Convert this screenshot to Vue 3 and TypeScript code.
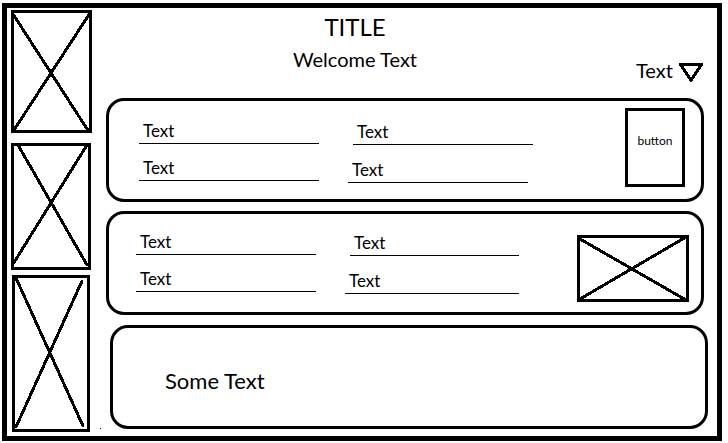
<script setup lang="ts">
import { reactive, ref } from 'vue'

type Line = [number, number, number, number]

interface Placeholder {
  height: number
  x: number
  width: number
  lines: Line[]
}

const placeholders: Placeholder[] = [
  { height: 123, x: 0, width: 81, lines: [[2, 4, 78, 122], [79, 3, 3, 120]] },
  { height: 127, x: 0, width: 80, lines: [[7, 2, 76, 122], [76, 2, 2, 121]] },
  { height: 157, x: 1, width: 78, lines: [[5, 3, 72, 151], [71, 6, 5, 152]] },
]

const choice = ref('Text')
const first = reactive([['Text', 'Text'], ['Text', 'Text']])
const second = reactive([['Text', 'Text'], ['Text', 'Text']])
</script>

<template>
  <div class="frame">
    <aside class="sidebar">
      <svg
        v-for="(p, i) in placeholders"
        :key="i"
        class="placeholder"
        :viewBox="`0 0 81 ${p.height}`"
        aria-hidden="true"
      >
        <rect :x="p.x + 1.5" y="1.5" :width="p.width - 3" :height="p.height - 3" />
        <line v-for="(l, j) in p.lines" :key="j" :x1="l[0]" :y1="l[1]" :x2="l[2]" :y2="l[3]" />
      </svg>
    </aside>
    <span class="speck"></span>

    <main class="main">
      <header class="header">
        <div class="heading">
          <h1>TITLE</h1>
          <p>Welcome Text</p>
        </div>
        <div class="dropdown">
          <select v-model="choice" aria-label="Text">
            <option>Text</option>
          </select>
          <svg class="arrow" viewBox="0 0 24 21" aria-hidden="true">
            <path d="M1.5 2.5H22.5L12 18.5Z" />
          </svg>
        </div>
      </header>

      <section class="card">
        <div class="fields">
          <div v-for="(column, c) in first" :key="c" class="column">
            <input v-for="(_, r) in column" :key="r" v-model="column[r]" type="text" aria-label="Text" />
          </div>
        </div>
        <button type="button" class="action">button</button>
      </section>

      <section class="card media">
        <div class="fields">
          <div v-for="(column, c) in second" :key="c" class="column">
            <input v-for="(_, r) in column" :key="r" v-model="column[r]" type="text" aria-label="Text" />
          </div>
        </div>
        <svg class="placeholder picture" viewBox="0 0 112 67" aria-hidden="true">
          <rect x="1.5" y="1.5" width="109" height="64" />
          <line x1="3" y1="4" x2="109" y2="65" />
          <line x1="109" y1="2" x2="3" y2="64" />
        </svg>
      </section>

      <section class="card note">
        <p>Some Text</p>
      </section>
    </main>
  </div>
</template>

<style>
body {
  background: #fff;
}
</style>

<style scoped>
* {
  box-sizing: border-box;
}

.frame {
  display: flex;
  margin: 3px 6px 2px 2px;
  padding: 2px 9px 4px 4px;
  border: 5px solid #000;
  background: #fff;
  color: #000;
  font-family: Lato, "Liberation Sans", sans-serif;
}

h1,
p {
  margin: 0;
  font-weight: 400;
}

.sidebar {
  display: flex;
  flex-direction: column;
  flex: none;
  width: 81px;
}

.placeholder {
  display: block;
  width: 100%;
  fill: none;
  stroke: #000;
  stroke-width: 3;
  stroke-linecap: round;
  shape-rendering: crispEdges;
}

.sidebar .placeholder:nth-child(2) {
  margin: 10px 0 5px;
}

.speck {
  flex: none;
  align-self: flex-end;
  width: 1px;
  height: 1px;
  margin: 0 5px 3px 8px;
  background: #000;
}

.main {
  flex: 1;
  min-width: 0;
}

.header {
  display: flex;
  align-items: flex-end;
  gap: 32px;
  height: 88px;
  padding: 0 4px 14px 0;
}

.heading {
  flex: 1;
  align-self: flex-start;
  text-align: center;
}

h1 {
  font-size: 24px;
  line-height: 34px;
}

.heading p {
  font-size: 20px;
  line-height: 30px;
}

.dropdown {
  position: relative;
  display: flex;
}

select {
  width: 68px;
  height: 28px;
  padding: 0;
  border: 0;
  background: none;
  color: inherit;
  font: 20px/28px Lato, "Liberation Sans", sans-serif;
  appearance: none;
}

.arrow {
  position: absolute;
  top: 6px;
  right: 1px;
  width: 24px;
  height: 21px;
  fill: none;
  stroke: #000;
  stroke-width: 3;
  stroke-linejoin: round;
  shape-rendering: crispEdges;
  pointer-events: none;
}

.card {
  display: flex;
  align-items: flex-start;
  gap: 92px;
  min-height: 104px;
  margin-right: 4px;
  padding: 7px 16px 7px 30px;
  border: 3px solid #000;
  border-radius: 18px;
}

.card + .card {
  margin-top: 9px;
}

.fields {
  flex: 1;
  display: grid;
  grid-template-columns: 180fr 185fr;
  gap: 29px;
  min-width: 0;
  padding-top: 11px;
}

.column {
  display: flex;
  flex-direction: column;
  gap: 12px;
  min-width: 0;
}

.column + .column {
  gap: 13px;
  padding-top: 1px;
}

input {
  min-width: 0;
  height: 25px;
  padding: 0 4px 2px;
  border: 0;
  border-bottom: 1px solid #000;
  border-radius: 0;
  background: none;
  color: inherit;
  font: 17px/22px Lato, "Liberation Sans", sans-serif;
}

.column + .column input {
  margin: 0 5px 0 0;
}

.column + .column input:first-child {
  margin: 0 0 0 5px;
}

.action {
  width: 60px;
  height: 79px;
  padding: 0 0 14px;
  border: 3px solid #000;
  background: #fff;
  color: inherit;
  font: 12px/16px Lato, "Liberation Sans", sans-serif;
}

.media {
  gap: 58px;
  padding: 5px 12px 4px 27px;
}

.media .fields {
  grid-template-columns: 180fr 174fr;
}

.media .column + .column input {
  margin-right: 0;
}

.picture {
  flex: none;
  width: 112px;
  margin-top: 16px;
}

.card.note {
  align-items: center;
  margin: 10px 0 0 4px;
  padding: 8px 52px 0;
  font-size: 22px;
  line-height: 28px;
}
</style>
